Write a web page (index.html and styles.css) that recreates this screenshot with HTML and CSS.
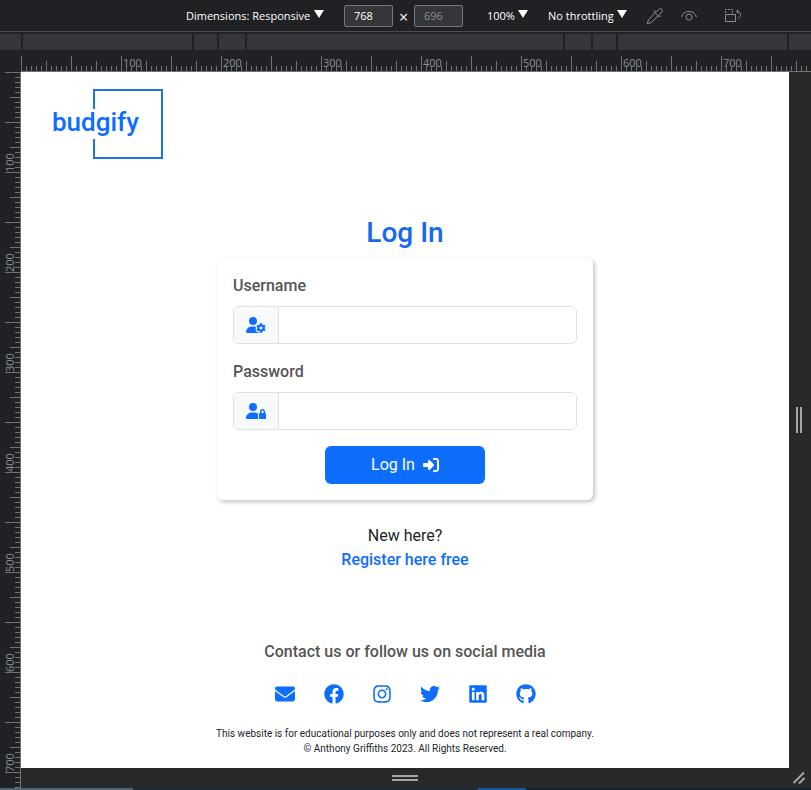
FILE: index.html
```html
<!DOCTYPE html>
<html lang="en">
<head>
<meta charset="utf-8">
<meta name="viewport" content="width=device-width, initial-scale=1">
<title>Budgify - Log In</title>
<link rel="stylesheet" href="styles.css">
</head>
<body>
<div class="toolbar">
  <label class="picker picker-device"><select aria-label="Dimensions"><option>Dimensions: Responsive</option></select></label>
  <input class="size" type="text" value="768" aria-label="Width">
  <span class="times">×</span>
  <input class="size size-dim" type="text" value="696" aria-label="Height">
  <label class="picker picker-zoom"><select aria-label="Zoom"><option>100%</option></select></label>
  <label class="picker picker-throttle"><select aria-label="Throttling"><option>No throttling</option></select></label>
  <button class="tool" type="button" aria-label="Pick colour">
    <svg width="18" height="18" viewBox="0 0 18 18"><path d="M9.500 5.500 2.600 12.400 1.200 16.800 5.600 15.400 12.500 8.500M8 4.600 13.400 10 14.500 8.900 13.200 7.600 16 4.800A2 2 0 0 0 13.200 2L10.400 4.800 9.100 3.500Z"/></svg>
  </button>
  <button class="tool" type="button" aria-label="Vision">
    <svg width="18" height="18" viewBox="0 0 18 18"><path d="M1.500 10C3.500 2.500 14.500 2.500 16.500 10"/><circle cx="9" cy="10" r="3"/></svg>
  </button>
  <button class="tool tool-rotate" type="button" aria-label="Rotate">
    <svg width="18" height="18" viewBox="0 0 18 18"><path d="M1.500 7.500H11.500V14.500H1.500Z"/><path stroke-dasharray="2 1" d="M1.500 6V2.500H8.500V6"/><path d="M14.500 2.500 12.500 4.500 14.500 6.500M12.500 4.500C18 4.500 17.500 10 14 11"/></svg>
  </button>
</div>
<div class="breakpoints">
  <span class="bp bp-edge-left"></span><span class="bp bp-wide"></span><span class="bp bp-small"></span><span class="bp bp-mid"></span><span class="bp bp-center"></span><span class="bp bp-mid"></span><span class="bp bp-small"></span><span class="bp bp-wide"></span><span class="bp bp-edge-right"></span>
</div>
<div class="stage">
  <div class="ruler-y"><span>100</span><span>200</span><span>300</span><span>400</span><span>500</span><span>600</span><span>700</span></div>
  <div class="ruler-x"><span></span><span>100</span><span>200</span><span>300</span><span>400</span><span>500</span><span>600</span><span>700</span></div>
  <div class="page">
    <header class="header">
      <a class="brand" href="#" aria-label="budgify">
        <svg width="114" height="72" viewBox="0 0 114 72"><path class="brand-box" d="M43 21V2H111V70H43V51"/><text class="brand-name" x="1" y="43">budgify</text></svg>
      </a>
    </header>
    <main class="login">
      <h1>Log In</h1>
      <form class="card">
        <label for="username">Username</label>
        <div class="group">
          <span class="addon"><svg width="20" height="16" viewBox="0 0 640 512"><path d="M224 0a128 128 0 1 1 0 256A128 128 0 1 1 224 0zM178.300 304h91.400c11.800 0 23.400 1.200 34.500 3.300c-2.100 18.500 7.400 35.600 21.800 44.800c-16.600 10.600-26.700 31.600-20 53.300c4 12.900 9.400 25.500 16.400 37.600s15.200 23.100 24.400 33c15.700 16.900 39.600 18.400 57.200 8.700v.9c0 9.200 2.700 18.500 7.900 26.300H29.700C13.300 512 0 498.700 0 482.300C0 383.800 79.800 304 178.300 304zM436 218.200c0-7 4.500-13.300 11.300-14.800c10.500-2.400 21.500-3.700 32.700-3.700s22.200 1.300 32.700 3.700c6.800 1.500 11.300 7.800 11.300 14.800v30.600c7.900 3.400 15.400 7.700 22.300 12.800l24.900-14.300c6.100-3.500 13.700-2.700 18.500 2.400c7.600 8.100 14.300 17.200 20.100 27.200s10.300 20.400 13.500 31c2.100 6.700-1.100 13.700-7.200 17.200l-25 14.400c.4 4 .7 8.100 .7 12.300s-.2 8.200-.7 12.300l25 14.400c6.100 3.500 9.200 10.500 7.200 17.200c-3.300 10.600-7.800 21-13.500 31s-12.500 19.100-20.100 27.200c-4.800 5.100-12.500 5.900-18.500 2.400l-24.900-14.300c-6.900 5.100-14.300 9.400-22.300 12.800l0 30.600c0 7-4.500 13.300-11.300 14.800c-10.500 2.400-21.500 3.700-32.700 3.700s-22.200-1.300-32.700-3.700c-6.800-1.500-11.300-7.800-11.300-14.800V454.800c-8-3.400-15.600-7.700-22.500-12.900l-24.700 14.300c-6.100 3.500-13.700 2.700-18.500-2.400c-7.600-8.100-14.300-17.200-20.100-27.200s-10.300-20.400-13.500-31c-2.100-6.700 1.100-13.700 7.200-17.200l24.800-14.300c-.4-4.100-.7-8.200-.7-12.400s.2-8.300 .7-12.400L343.800 325c-6.100-3.500-9.200-10.500-7.200-17.200c3.300-10.600 7.700-21 13.500-31s12.500-19.100 20.100-27.200c4.800-5.100 12.400-5.900 18.500-2.400l24.800 14.300c6.900-5.100 14.500-9.400 22.500-12.900V218.200zm92.100 133.500a48.100 48.100 0 1 0 -96.100 0 48.100 48.100 0 1 0 96.100 0z"/></svg></span>
          <input id="username" type="text">
        </div>
        <label for="password">Password</label>
        <div class="group">
          <span class="addon"><svg width="20" height="16" viewBox="0 0 640 512"><path d="M224 256A128 128 0 1 0 224 0a128 128 0 1 0 0 256zm-45.700 48C79.800 304 0 383.800 0 482.300C0 498.700 13.300 512 29.700 512H392.600c-5.400-9.400-8.600-20.300-8.600-32V352c0-2.100 .1-4.200 .3-6.300c-31-26-71-41.700-114.600-41.700H178.300zM528 240c17.700 0 32 14.300 32 32v48H496V272c0-17.700 14.300-32 32-32zm-80 32v48c-17.700 0-32 14.300-32 32V480c0 17.700 14.300 32 32 32H608c17.700 0 32-14.300 32-32V352c0-17.700-14.300-32-32-32V272c0-44.200-35.800-80-80-80s-80 35.800-80 80z"/></svg></span>
          <input id="password" type="password">
        </div>
        <button class="submit" type="submit">Log In <svg width="16" height="16" viewBox="0 0 512 512"><path d="M217.900 105.900L340.700 228.700c7.200 7.200 11.300 17.100 11.300 27.300s-4.100 20.100-11.300 27.300L217.900 406.100c-6.400 6.400-15 9.900-24 9.900c-18.700 0-33.900-15.200-33.900-33.900l0-62.100L32 320c-17.700 0-32-14.300-32-32l0-64c0-17.700 14.300-32 32-32l128 0 0-62.100c0-18.700 15.200-33.900 33.900-33.900c9 0 17.600 3.600 24 9.900zM352 416l64 0c17.700 0 32-14.300 32-32l0-256c0-17.700-14.300-32-32-32l-64 0c-17.700 0-32-14.300-32-32s14.300-32 32-32l64 0c53 0 96 43 96 96l0 256c0 53-43 96-96 96l-64 0c-17.700 0-32-14.300-32-32s14.300-32 32-32z"/></svg></button>
      </form>
      <p class="signup">New here?<br><a href="#">Register here free</a></p>
    </main>
    <footer class="footer">
      <h2>Contact us or follow us on social media</h2>
      <nav class="social">
        <a href="#" aria-label="Email"><svg width="20" height="20" viewBox="0 0 512 512"><path d="M48 64C21.500 64 0 85.500 0 112c0 15.100 7.100 29.300 19.200 38.400L236.800 313.600c11.400 8.500 27 8.500 38.400 0L492.800 150.400c12.100-9.100 19.200-23.300 19.200-38.400c0-26.500-21.500-48-48-48H48zM0 176V384c0 35.300 28.700 64 64 64H448c35.300 0 64-28.700 64-64V176L294.400 339.200c-22.800 17.100-54 17.100-76.800 0L0 176z"/></svg></a>
        <a href="#" aria-label="Facebook"><svg width="20" height="20" viewBox="0 0 512 512"><path d="M504 256C504 119 393 8 256 8S8 119 8 256c0 123.780 90.690 226.380 209.250 245V327.690h-63V256h63v-54.640c0-62.150 37-96.480 93.670-96.480 27.140 0 55.520 4.840 55.520 4.840v61h-31.280c-30.800 0-40.410 19.120-40.410 38.730V256h68.780l-11 71.690h-57.780V501C413.310 482.380 504 379.780 504 256z"/></svg></a>
        <a href="#" aria-label="Instagram"><svg width="18" height="20" viewBox="0 0 448 512"><path d="M224.100 141c-63.600 0-114.900 51.300-114.900 114.900s51.300 114.900 114.900 114.900S339 319.500 339 255.900 287.700 141 224.100 141zm0 189.600c-41.100 0-74.700-33.500-74.700-74.700s33.500-74.700 74.700-74.700 74.700 33.500 74.700 74.700-33.600 74.700-74.700 74.700zm146.400-194.300c0 14.900-12 26.800-26.800 26.800-14.900 0-26.800-12-26.800-26.800s12-26.800 26.800-26.800 26.800 12 26.800 26.800zm76.100 27.200c-1.700-35.900-9.900-67.700-36.200-93.900-26.200-26.200-58-34.400-93.900-36.200-37-2.100-147.900-2.100-184.900 0-35.800 1.700-67.600 9.900-93.900 36.100s-34.400 58-36.200 93.900c-2.100 37-2.100 147.900 0 184.900 1.700 35.900 9.900 67.700 36.200 93.900s58 34.400 93.900 36.200c37 2.100 147.900 2.100 184.900 0 35.900-1.700 67.700-9.900 93.900-36.200 26.200-26.200 34.400-58 36.200-93.900 2.100-37 2.100-147.800 0-184.800zM398.800 388c-7.800 19.600-22.900 34.700-42.600 42.600-29.500 11.700-99.500 9-132.100 9s-102.700 2.600-132.100-9c-19.600-7.800-34.700-22.900-42.600-42.600-11.700-29.500-9-99.500-9-132.100s-2.600-102.700 9-132.100c7.800-19.600 22.900-34.700 42.600-42.600 29.500-11.700 99.500-9 132.100-9s102.700-2.600 132.100 9c19.600 7.800 34.700 22.900 42.600 42.600 11.700 29.500 9 99.500 9 132.100s2.700 102.700-9 132.100z"/></svg></a>
        <a href="#" aria-label="Twitter"><svg width="20" height="20" viewBox="0 0 512 512"><path d="M459.370 151.716c.325 4.548.325 9.097.325 13.645 0 138.720-105.583 298.558-298.558 298.558-59.452 0-114.680-17.219-161.137-47.106 8.447.974 16.568 1.299 25.340 1.299 49.055 0 94.213-16.568 130.274-44.832-46.132-.975-84.792-31.188-98.112-72.772 6.498.974 12.995 1.624 19.818 1.624 9.421 0 18.843-1.300 27.614-3.573-48.081-9.747-84.143-51.980-84.143-102.985v-1.299c13.969 7.797 30.214 12.670 47.431 13.319-28.264-18.843-46.781-51.005-46.781-87.391 0-19.492 5.197-37.360 14.294-52.954 51.655 63.675 129.300 105.258 216.365 109.807-1.624-7.797-2.599-15.918-2.599-24.040 0-57.828 46.782-104.934 104.934-104.934 30.213 0 57.502 12.670 76.670 33.137 23.715-4.548 46.456-13.320 66.599-25.340-7.798 24.366-24.366 44.833-46.132 57.827 21.117-2.273 41.584-8.122 60.426-16.243-14.292 20.791-32.161 39.308-52.628 54.253z"/></svg></a>
        <a href="#" aria-label="LinkedIn"><svg width="18" height="20" viewBox="0 0 448 512"><path d="M416 32H31.900C14.300 32 0 46.500 0 64.300v383.400C0 465.500 14.300 480 31.900 480H416c17.600 0 32-14.500 32-32.300V64.300c0-17.800-14.400-32.300-32-32.300zM135.400 416H69V202.200h66.500V416zm-33.200-243c-21.300 0-38.500-17.300-38.500-38.500S80.900 96 102.200 96c21.200 0 38.500 17.300 38.500 38.500 0 21.300-17.200 38.500-38.500 38.500zm282.100 243h-66.400V312c0-24.800-.5-56.700-34.500-56.700-34.600 0-39.900 27-39.900 54.900V416h-66.400V202.200h63.700v29.200h.9c8.900-16.800 30.600-34.500 62.900-34.500 67.200 0 79.700 44.300 79.700 101.900V416z"/></svg></a>
        <a href="#" aria-label="GitHub"><svg width="20" height="20" viewBox="0 0 496 512"><path d="M244.800 8C106.100 8 0 113.300 0 252c0 110.900 69.800 205.800 169.500 239.200 12.800 2.300 17.300-5.600 17.300-12.100 0-6.200-.3-40.400-.3-61.400 0 0-70 15-84.700-29.800 0 0-11.400-29.100-27.800-36.600 0 0-22.900-15.700 1.600-15.400 0 0 24.900 2 38.600 25.800 21.900 38.600 58.600 27.500 72.900 20.900 2.300-16 8.800-27.100 16-33.700-55.900-6.200-112.300-14.300-112.300-110.500 0-27.500 7.600-41.300 23.600-58.900-2.600-6.500-11.100-33.300 2.600-67.900 20.900-6.500 69 27 69 27 20-5.600 41.500-8.500 62.800-8.500s42.800 2.900 62.800 8.500c0 0 48.100-33.600 69-27 13.700 34.700 5.200 61.400 2.600 67.900 16 17.700 25.800 31.500 25.800 58.900 0 96.500-58.900 104.200-114.800 110.500 9.200 7.900 17 22.900 17 46.400 0 33.700-.3 75.400-.3 83.600 0 6.500 4.600 14.400 17.300 12.100C428.200 457.800 496 362.900 496 252 496 113.300 383.500 8 244.800 8z"/></svg></a>
      </nav>
      <p class="legal">This website is for educational purposes only and does not represent a real company.<br>© Anthony Griffiths 2023. All Rights Reserved.</p>
    </footer>
  </div>
  <div class="resize-x"><span class="grip-x"></span></div>
  <div class="resize-y"><span class="grip-y"></span></div>
  <div class="corner"><svg width="14" height="14" viewBox="0 0 14 14"><path d="M1.500 12 12 1.500M7 12.500 12.500 7"/></svg></div>
</div>
<div class="edge"><span class="edge-tab"></span><span class="edge-gap"></span><span class="edge-active"></span></div>
</body>
</html>
```
FILE: styles.css
```css
:root {
  --dark: #202124;
  --panel: #28292b;
  --tick: #707276;
  --blue: #0d6efd;
}
* { box-sizing: border-box; }
body {
  margin: 0;
  min-height: 100vh;
  display: flex;
  flex-direction: column;
  background: var(--dark);
  color: #212529;
  font: 16px/24px Roboto, sans-serif;
}
h1, h2, p { margin: 0; }
a { color: var(--blue); text-decoration: none; }
svg { display: block; }

/* Device toolbar */
.toolbar {
  display: flex;
  align-items: center;
  height: 32px;
  padding-left: 186px;
  border-bottom: 1px solid #4a4c50;
  color: #fff;
  font: 11px/16px "Open Sans", sans-serif;
}
.picker { display: flex; align-items: center; gap: 3px; }
.picker::after {
  content: "";
  width: 10px;
  height: 8px;
  margin-bottom: 3px;
  background: #fff;
  clip-path: polygon(0 0, 100% 0, 50% 100%);
}
.picker select {
  appearance: none;
  padding: 0;
  border: 0;
  background: none;
  color: inherit;
  font: inherit;
}
.picker-device { width: 158px; }
.picker-zoom { width: 61px; margin-left: 24px; }
.picker-throttle { width: 98px; }
.size {
  width: 49px;
  height: 22px;
  padding: 0 9px;
  border: 1px solid #75777b;
  border-radius: 2px;
  background: #35363a;
  color: #fff;
  font: inherit;
}
.size-dim { color: #8c8e92; }
.times { width: 21px; padding-top: 3px; text-align: center; font-size: 16px; }
.tool { margin-right: 16px; padding: 0; border: 0; background: none; }
.tool-rotate { margin: 0 0 0 10px; }
.tool svg { fill: none; stroke: #8c8e92; stroke-width: 1; }

/* Media query bar */
.breakpoints { display: flex; gap: 2px; height: 18px; padding: 2px 0 0; }
.bp { background: #36373b; }
.bp-edge-left { width: 21px; }
.bp-wide { width: 169px; }
.bp-small { width: 23px; }
.bp-mid { width: 26px; }
.bp-center { flex: 1; }
.bp-edge-right { width: 22px; }

/* Rulers around the device page */
.stage {
  flex: 1;
  display: grid;
  grid-template: 22px 1fr 20px / 21px 1fr 22px;
  background: linear-gradient(90deg, var(--dark) 21px, var(--panel) 21px);
}
.ruler-x, .ruler-y { overflow: hidden; color: #8e9196; font: 11px/14px "Open Sans", sans-serif; }
.ruler-x {
  grid-area: 1 / 2 / 2 / 4;
  display: flex;
  padding-top: 6px;
  border-bottom: 1px solid var(--tick);
  background:
    repeating-linear-gradient(90deg, var(--tick) 0 1px, transparent 1px 50px) bottom / 100% 15px no-repeat,
    repeating-linear-gradient(90deg, var(--tick) 0 1px, transparent 1px 25px) bottom / 100% 10px no-repeat,
    repeating-linear-gradient(90deg, var(--tick) 0 1px, transparent 1px 5px) bottom / 100% 5px no-repeat,
    var(--dark);
}
.ruler-x span { flex: 0 0 100px; padding-left: 2px; }
.ruler-y {
  grid-area: 1 / 1 / 4 / 2;
  margin-top: 22px;
  padding-left: 3px;
  border-right: 1px solid var(--tick);
  background:
    repeating-linear-gradient(180deg, var(--tick) 0 1px, transparent 1px 50px) right / 15px 100% no-repeat,
    repeating-linear-gradient(180deg, var(--tick) 0 1px, transparent 1px 25px) right / 10px 100% no-repeat,
    repeating-linear-gradient(180deg, var(--tick) 0 1px, transparent 1px 5px) right / 5px 100% no-repeat,
    var(--dark);
  contain: size;
}
.ruler-y span {
  display: block;
  height: 100px;
  width: 14px;
  writing-mode: vertical-rl;
  transform: rotate(180deg);
}

/* Page */
.page {
  grid-area: 2 / 2;
  display: flex;
  flex-direction: column;
  padding: 16px 30px 12px;
  background: #fff;
}
.header { display: flex; }
.brand-box { fill: none; stroke: #1a73e0; stroke-width: 2; }
.brand-name { fill: var(--blue); font: 500 26px Roboto, sans-serif; }
.login { margin: 56px auto 0; width: 100%; max-width: 376px; text-align: center; }
h1 { margin-bottom: 8px; color: #1569ec; font-size: 28px; line-height: 34px; font-weight: 500; }
.card {
  display: flex;
  flex-direction: column;
  padding: 16px;
  border-radius: 6px;
  box-shadow: 2px 2px 4px rgba(0, 0, 0, .24);
  text-align: left;
}
.card label { margin-bottom: 8px; color: #555; font-weight: 500; }
.group {
  display: flex;
  height: 38px;
  margin-bottom: 16px;
  border: 1px solid #dee2e6;
  border-radius: 6px;
  overflow: hidden;
}
.addon {
  display: flex;
  align-items: center;
  padding: 0 12px;
  border-right: 1px solid #dee2e6;
  background: #f8f9fa;
}
.addon svg, .social svg { fill: var(--blue); }
.group input { flex: 1; min-width: 0; padding: 0 12px; border: 0; background: #fff; font: inherit; }
.submit {
  display: flex;
  align-items: center;
  justify-content: center;
  gap: 8px;
  align-self: center;
  width: 160px;
  height: 38px;
  border: 0;
  border-radius: 6px;
  background: var(--blue);
  color: #fff;
  font: inherit;
}
.submit svg { fill: #fff; }
.signup { margin-top: 24px; }
.signup a { font-weight: 500; }
.footer { margin-top: auto; text-align: center; }
h2 { color: #555; font-size: 16px; line-height: 24px; font-weight: 500; }
.social { display: flex; justify-content: center; gap: 29px; margin: 20px 0 22px; }
.legal { font-size: 10px; line-height: 15px; }

/* Resize handles */
.resize-x { grid-area: 2 / 3; display: flex; align-items: center; justify-content: center; padding-right: 2px; }
.grip-x { width: 6px; height: 26px; border: solid #a5a6a8; border-width: 0 2px; }
.resize-y { grid-area: 3 / 2; display: flex; align-items: center; justify-content: center; }
.grip-y { width: 26px; height: 6px; border: solid #a5a6a8; border-width: 2px 0; }
.corner { grid-area: 3 / 3; display: flex; align-items: center; justify-content: center; padding-right: 2px; }
.corner svg { fill: none; stroke: #a5a6a8; stroke-width: 2; }
.edge { display: flex; height: 2px; background: #152431; }
.edge-tab { width: 133px; background: #4d6378; }
.edge-gap { width: 345px; background: #1c2d3a; }
.edge-active { width: 48px; background: #155a94; }
```
